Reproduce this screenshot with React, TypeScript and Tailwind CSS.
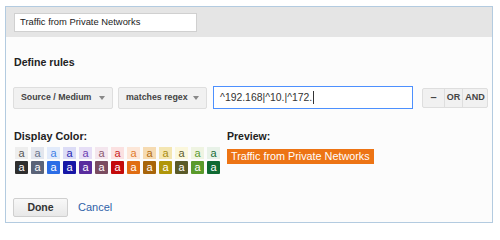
import React from "react";

const light = [
  { bg: "bg-[#eeeeee]", fg: "text-[#555555]" },
  { bg: "bg-[#e3e6ee]", fg: "text-[#6a7389]" },
  { bg: "bg-[#e2ebfb]", fg: "text-[#3f7fe6]" },
  { bg: "bg-[#dcdcf6]", fg: "text-[#2a2ab0]" },
  { bg: "bg-[#e6def6]", fg: "text-[#6a3cb0]" },
  { bg: "bg-[#f4e6ee]", fg: "text-[#8a5a70]" },
  { bg: "bg-[#fbe1e1]", fg: "text-[#c81c1c]" },
  { bg: "bg-[#fde7d8]", fg: "text-[#e07a2a]" },
  { bg: "bg-[#f6dbb2]", fg: "text-[#b06a10]" },
  { bg: "bg-[#f4e6b2]", fg: "text-[#a88c10]" },
  { bg: "bg-[#fbf7dc]", fg: "text-[#5c5c2e]" },
  { bg: "bg-[#eff4e2]", fg: "text-[#5a9a30]" },
  { bg: "bg-[#e8f2e8]", fg: "text-[#166e36]" },
];

const dark = [
  "bg-[#2e2e2e]",
  "bg-[#5a6378]",
  "bg-[#2b6de6]",
  "bg-[#1717a6]",
  "bg-[#5a2c9e]",
  "bg-[#7a4c60]",
  "bg-[#c40a0a]",
  "bg-[#e06d12]",
  "bg-[#a8650a]",
  "bg-[#b0960a]",
  "bg-[#5a5a28]",
  "bg-[#5a9a2a]",
  "bg-[#0f6a32]",
];

function Select({ label, width }: { label: string; width: string }) {
  return (
    <div
      className={`flex h-[22px] ${width} shrink-0 items-center justify-between whitespace-nowrap rounded-[2px] border border-[#dedede] bg-[#f1f1f1] pl-[7px] pr-[7px] text-[8.8px] font-bold text-[#444]`}
    >
      <span>{label}</span>
      <svg width="6" height="4" viewBox="0 0 6 4">
        <path d="M0 0h6L3 4z" fill="#888" />
      </svg>
    </div>
  );
}

export default function App() {
  return (
    <div className="h-[233px] w-[500px] bg-white pl-[5px] pt-[6px]" style={{ fontFamily: '"Liberation Sans", Arial, sans-serif' }}>
      <div className="h-[217px] w-[488px] border border-[#b3cbe0] bg-[#fcfcfc]">
        <div className="h-[30px] bg-[#e5e5e5] pl-[8px] pt-[6px]">
          <div className="flex h-[19px] w-[183px] items-center border border-[#d0d0d0] bg-white pl-[5px] text-[9.4px] text-[#222]">
            Traffic from Private Networks
          </div>
        </div>

        <div className="px-[7px]">
          <div className="mt-[18px] pl-px text-[10.6px] font-bold leading-[14px] text-[#222]">Define rules</div>

          <div className="mt-[17px] flex items-center">
            <Select label="Source / Medium" width="w-[100px]" />
            <div className="w-[5px] shrink-0" />
            <Select label="matches regex" width="w-[89px]" />
            <div className="ml-[6px] flex h-[23px] w-[200px] shrink-0 items-center whitespace-nowrap border border-[#4d90fe] bg-white pl-[6px] text-[10.4px] text-[#333]">
              ^192.168|^10.|^172.<span className="ml-[1px] inline-block h-[13px] w-px bg-[#333]" />
            </div>
            <div className="ml-[9px] flex h-[20px] shrink-0 rounded-[2px] border border-[#dedede] bg-[#f1f1f1] text-[9px] font-bold text-[#444]">
              <div className="flex w-[22px] items-center justify-center border-r border-[#dedede] text-[11px]">–</div>
              <div className="flex w-[18px] items-center justify-center border-r border-[#dedede]">OR</div>
              <div className="flex w-[24px] items-center justify-center">AND</div>
            </div>
          </div>

          <div className="mt-[20px] flex">
            <div className="w-[214px] shrink-0">
              <div className="pl-px text-[10.8px] font-bold leading-[14px] text-[#222]">Display Color:</div>
              <div className="mt-[4px] flex gap-[3px] pl-[2px]">
                {light.map((c, i) => (
                  <div key={i} className={`flex h-[12px] w-[13px] items-center justify-center text-[11px] leading-none ${c.bg} ${c.fg}`}>
                    a
                  </div>
                ))}
              </div>
              <div className="mt-[2px] flex gap-[3px] pl-[2px]">
                {dark.map((c, i) => (
                  <div key={i} className={`flex h-[13px] w-[13px] items-center justify-center rounded-[1px] text-[11px] leading-none text-white ${c}`}>
                    a
                  </div>
                ))}
              </div>
            </div>
            <div>
              <div className="text-[10.5px] font-bold leading-[14px] text-[#222]">Preview:</div>
              <div className="mt-[5px] inline-block whitespace-nowrap bg-[#ed7414] px-[4px] text-[10.8px] leading-[15px] text-white">
                Traffic from Private Networks
              </div>
            </div>
          </div>

          <div className="mt-[24px] flex items-center">
            <div className="flex h-[19px] w-[55px] items-center justify-center rounded-[2px] border border-[#cfcfcf] bg-gradient-to-b from-[#f8f8f8] to-[#e8e8e8] text-[10.5px] font-bold text-[#333]">
              Done
            </div>
            <span className="ml-[10px] text-[11px] text-[#2f62a8]">Cancel</span>
          </div>
        </div>
      </div>
    </div>
  );
}
